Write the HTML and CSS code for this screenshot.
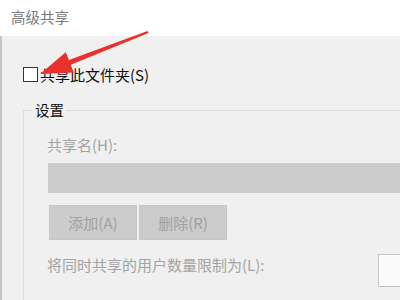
FILE: index.html
```html
<!DOCTYPE html>
<html lang="zh-CN">
<head>
<meta charset="utf-8">
<title>高级共享</title>
<link rel="stylesheet" href="styles.css">
</head>
<body>
<div class="window">
  <div class="titlebar">高级共享</div>
  <div class="content">
    <label class="check-row">
      <span class="checkbox"></span>
      <span class="check-label">共享此文件夹(S)</span>
    </label>
    <fieldset class="group">
      <legend class="group-title">设置</legend>
      <div class="field-label">共享名(H):</div>
      <div class="input"></div>
      <div class="buttons">
        <div class="btn">添加(A)</div>
        <div class="btn">删除(R)</div>
      </div>
      <div class="limit-row">
        <div class="field-label limit-label">将同时共享的用户数量限制为(L):</div>
        <div class="spin"></div>
      </div>
    </fieldset>
  </div>
  <svg class="arrow" width="400" height="300" viewBox="0 0 400 300">
    <polygon points="40,74 65.8,52.2 68.9,60.1 147.5,31 148.5,33 70.7,64.7 73.8,72.6" fill="#e8312b"/>
  </svg>
</div>
</body>
</html>
```
FILE: styles.css
```css
html, body {
  margin: 0;
  padding: 0;
}
body {
  width: 400px;
  height: 300px;
  overflow: hidden;
  background: #f0f0f0;
  font-family: "Noto Sans CJK SC", "Noto Sans", sans-serif;
}
.window {
  position: relative;
  width: 400px;
  height: 300px;
  overflow: hidden;
}
.titlebar {
  height: 36px;
  box-sizing: border-box;
  background: #ffffff;
  padding: 7px 0 0 11px;
  font-size: 14.5px;
  line-height: 20px;
  color: #7a7a7a;
}
.content {
  height: 264px;
  box-sizing: border-box;
  border-left: 2px solid #c4c4c4;
  padding: 31px 0 0 21px;
  overflow: hidden;
}
.check-row {
  display: flex;
  align-items: center;
  gap: 2px;
  height: 15px;
}
.checkbox {
  width: 13px;
  height: 13px;
  border: 1px solid #333333;
  background: #ffffff;
}
.check-label {
  font-size: 15px;
  line-height: 15px;
  color: #111111;
}
.group {
  margin: 18px 0 0 0;
  padding: 0 0 0 24px;
  width: 420px;
  border: 1px solid #dcdcdc;
  border-right: none;
  border-bottom: none;
  min-height: 200px;
}
.group-title {
  margin-left: -15px;
  padding: 0 2px;
  font-size: 14.5px;
  line-height: 20px;
  color: #111111;
}
.field-label {
  font-size: 15px;
  line-height: 20px;
  color: #a3a3a3;
}
.group > .field-label {
  margin-top: 15px;
  margin-left: -1px;
}
.input {
  margin-top: 8px;
  height: 30px;
  background: #cccccc;
}
.buttons {
  display: flex;
  gap: 2px;
  margin-top: 12px;
  margin-left: 1px;
}
.btn {
  width: 86px;
  height: 33px;
  border: 1px solid #c6c6c6;
  background: #cccccc;
  color: #a0a0a0;
  font-size: 15px;
  line-height: 33px;
  text-align: center;
}
.limit-row {
  display: grid;
  grid-template-columns: 330px auto;
  align-items: start;
  margin-top: 14px;
}
.limit-label {
  margin-top: 1px;
  margin-left: -1px;
}
.spin {
  height: 31px;
  border: 1px solid #c2c2c2;
  background: #fafafa;
  box-shadow: inset 0 0 0 1px #ffffff;
}
.arrow {
  position: absolute;
  left: 0;
  top: 0;
  pointer-events: none;
}
```
